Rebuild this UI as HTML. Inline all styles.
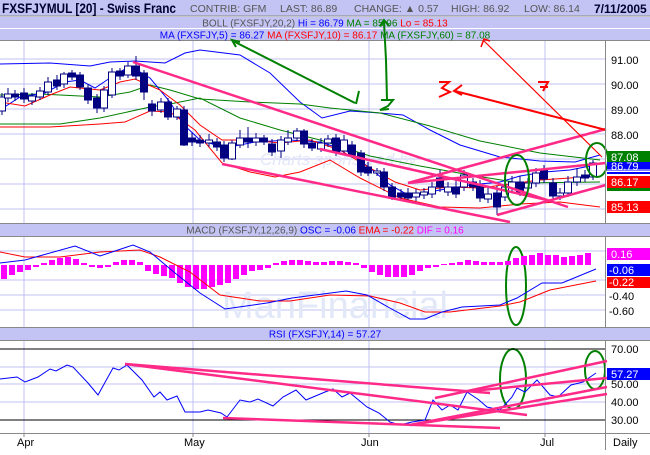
<!DOCTYPE html><html><head><style>
body{margin:0;width:650px;height:450px;overflow:hidden;background:#fff;font-family:"Liberation Sans",sans-serif}
</style></head><body>
<svg width="650" height="450" viewBox="0 0 650 450" xmlns="http://www.w3.org/2000/svg" font-family="Liberation Sans, sans-serif">
<rect width="650" height="450" fill="#fff"/>
<!-- header -->
<rect x="0" y="0" width="650" height="16" fill="#c4c4f4"/>
<line x1="0" y1="16" x2="650" y2="16" stroke="#888"/>
<text x="2" y="13" font-size="14" font-weight="bold" fill="#000030" textLength="174" lengthAdjust="spacingAndGlyphs">FXSFJYMUL [20] - Swiss Franc</text>
<text x="190" y="12" font-size="10.5" fill="#555">CONTRIB: GFM</text>
<text x="280" y="12" font-size="10.5" fill="#555">LAST: 86.89</text>
<text x="354" y="12" font-size="10.5" fill="#555">CHANGE: ▲ 0.57</text>
<text x="451" y="12" font-size="10.5" fill="#555">HIGH: 86.92</text>
<text x="524" y="12" font-size="10.5" fill="#555">LOW: 86.14</text>
<text x="594" y="13" font-size="12" font-weight="bold" fill="#000030">7/11/2005</text>
<rect x="0" y="17" width="650" height="11" fill="#c4c4f4"/>
<line x1="0" y1="28.5" x2="650" y2="28.5" stroke="#fff"/>
<rect x="0" y="29" width="650" height="11" fill="#c4c4f4"/>
<line x1="0" y1="40.5" x2="650" y2="40.5" stroke="#888"/>
<text x="325" y="26.5" font-size="10" text-anchor="middle"><tspan fill="#555">BOLL (FXSFJY,20,2) </tspan><tspan fill="#0000ff">Hi = 86.79 </tspan><tspan fill="#008000">MA = 85.96 </tspan><tspan fill="#ff0000">Lo = 85.13</tspan></text>
<text x="325" y="38.5" font-size="10" text-anchor="middle"><tspan fill="#0000ff">MA (FXSFJY,5) = 86.27 </tspan><tspan fill="#ff0000">MA (FXSFJY,10) = 86.17 </tspan><tspan fill="#008000">MA (FXSFJY,60) = 87.08</tspan></text>
<!-- grids main -->
<g stroke="#c0c0f0" stroke-width="1">
<line x1="0" y1="59" x2="605" y2="59"/><line x1="0" y1="84" x2="605" y2="84"/><line x1="0" y1="109" x2="605" y2="109"/><line x1="0" y1="134" x2="605" y2="134"/><line x1="0" y1="159" x2="605" y2="159"/><line x1="0" y1="184" x2="605" y2="184"/><line x1="0" y1="209" x2="605" y2="209"/>
<line x1="24" y1="41" x2="24" y2="223"/><line x1="193" y1="41" x2="193" y2="223"/><line x1="369" y1="41" x2="369" y2="223"/><line x1="545" y1="41" x2="545" y2="223"/>
<line x1="0" y1="251" x2="605" y2="251"/><line x1="0" y1="280" x2="605" y2="280"/><line x1="0" y1="295" x2="605" y2="295"/><line x1="0" y1="310" x2="605" y2="310"/>
<line x1="24" y1="237" x2="24" y2="327"/><line x1="193" y1="237" x2="193" y2="327"/><line x1="369" y1="237" x2="369" y2="327"/><line x1="545" y1="237" x2="545" y2="327"/>
<line x1="0" y1="367" x2="605" y2="367"/><line x1="0" y1="384" x2="605" y2="384"/><line x1="0" y1="402" x2="605" y2="402"/>
<line x1="24" y1="341" x2="24" y2="433"/><line x1="193" y1="341" x2="193" y2="433"/><line x1="369" y1="341" x2="369" y2="433"/><line x1="545" y1="341" x2="545" y2="433"/>
</g>
<!-- watermarks -->
<text x="260" y="165" font-size="17" fill="#e2e6f8" font-style="italic">Charts sponsored by</text>
<text x="222" y="318" font-size="38" fill="#e2e8f8">ManFinancial</text>
<!-- main lines -->
<g fill="none" stroke-width="1">
<polyline stroke="#0000ff" points="0,64 50,63 90,66 110,62 135,61 165,63 185,53 200,50 240,55 270,73 300,102 322,118 350,111 380,113 403,115 430,130 460,145 500,157 540,161 575,162 600,155"/>
<polyline stroke="#008000" points="0,124 60,124 100,118 150,107 170,104 200,98 240,118 280,130 320,140 370,156 420,166 470,175 520,183 600,182"/>
<polyline stroke="#ff0000" points="0,127 50,127 100,124 125,122 150,111 170,112 195,130 222,163 250,172 275,177 300,172 330,160 360,178 400,198 440,207 480,208 520,204 560,202 600,207"/>
<polyline stroke="#008000" points="0,95 40,94 80,96 100,97 130,92 150,85 170,90 200,99 250,102 300,104 330,108 380,113 430,126 480,141 540,153 600,160"/>
<polyline stroke="#0000ff" points="0,110 20,97 45,93 65,82 80,80 95,88 110,78 130,66 150,78 170,102 184,125 200,140 225,148 255,142 290,140 320,142 345,150 370,168 390,185 410,196 440,190 470,185 500,182 520,176 545,172 570,170 590,166"/>
<polyline stroke="#ff0000" points="0,102 25,106 50,95 70,87 100,90 120,82 135,79 160,90 180,105 200,125 222,140 250,140 280,143 310,140 340,150 370,168 395,182 420,190 450,187 480,188 510,184 540,180 570,178 592,176"/>
</g>
<!-- candles -->
<g stroke="#000080" stroke-width="1">
<line x1="2" y1="93" x2="2" y2="115"/><line x1="8" y1="88" x2="8" y2="102"/><line x1="15" y1="90" x2="15" y2="101"/><line x1="24" y1="88" x2="24" y2="103"/><line x1="32" y1="93" x2="32" y2="105"/><line x1="40" y1="87" x2="40" y2="100"/><line x1="48" y1="77" x2="48" y2="95"/><line x1="57" y1="75" x2="57" y2="90"/><line x1="64" y1="72" x2="64" y2="88"/><line x1="72" y1="70" x2="72" y2="80"/><line x1="80" y1="72" x2="80" y2="90"/><line x1="88" y1="84" x2="88" y2="104"/><line x1="97" y1="94" x2="97" y2="113"/><line x1="104" y1="86" x2="104" y2="112"/><line x1="112" y1="68" x2="112" y2="98"/><line x1="120" y1="68" x2="120" y2="80"/><line x1="128" y1="62" x2="128" y2="78"/><line x1="136" y1="56" x2="136" y2="80"/><line x1="144" y1="70" x2="144" y2="100"/><line x1="152" y1="100" x2="152" y2="116"/><line x1="161" y1="98" x2="161" y2="113"/><line x1="168" y1="98" x2="168" y2="120"/><line x1="177" y1="106" x2="177" y2="120"/><line x1="184" y1="106" x2="184" y2="146"/><line x1="192" y1="133" x2="192" y2="146"/><line x1="200" y1="135" x2="200" y2="147"/><line x1="209" y1="134" x2="209" y2="147"/><line x1="217" y1="138" x2="217" y2="151"/><line x1="224" y1="141" x2="224" y2="162"/><line x1="232" y1="140" x2="232" y2="160"/><line x1="240" y1="130" x2="240" y2="148"/><line x1="248" y1="127" x2="248" y2="148"/><line x1="256" y1="133" x2="256" y2="146"/><line x1="264" y1="135" x2="264" y2="145"/><line x1="272" y1="139" x2="272" y2="156"/><line x1="281" y1="136" x2="281" y2="158"/><line x1="288" y1="130" x2="288" y2="145"/><line x1="297" y1="128" x2="297" y2="141"/><line x1="304" y1="129" x2="304" y2="148"/><line x1="312" y1="139" x2="312" y2="151"/><line x1="321" y1="138" x2="321" y2="152"/><line x1="328" y1="135" x2="328" y2="147"/><line x1="336" y1="134" x2="336" y2="156"/><line x1="344" y1="135" x2="344" y2="155"/><line x1="352" y1="141" x2="352" y2="158"/><line x1="361" y1="150" x2="361" y2="176"/><line x1="368" y1="162" x2="368" y2="176"/><line x1="377" y1="168" x2="377" y2="176"/><line x1="384" y1="168" x2="384" y2="191"/><line x1="392" y1="183" x2="392" y2="200"/><line x1="401" y1="189" x2="401" y2="200"/><line x1="408" y1="188" x2="408" y2="202"/><line x1="416" y1="189" x2="416" y2="201"/><line x1="424" y1="188" x2="424" y2="199"/><line x1="432" y1="182" x2="432" y2="198"/><line x1="440" y1="170" x2="440" y2="192"/><line x1="448" y1="182" x2="448" y2="196"/><line x1="456" y1="180" x2="456" y2="198"/><line x1="464" y1="170" x2="464" y2="191"/><line x1="473" y1="178" x2="473" y2="191"/><line x1="480" y1="180" x2="480" y2="202"/><line x1="488" y1="188" x2="488" y2="203"/><line x1="497" y1="186" x2="497" y2="215"/><line x1="505" y1="180" x2="505" y2="201"/><line x1="512" y1="176" x2="512" y2="192"/><line x1="520" y1="176" x2="520" y2="196"/><line x1="528" y1="178" x2="528" y2="192"/><line x1="536" y1="168" x2="536" y2="187"/><line x1="544" y1="165" x2="544" y2="183"/><line x1="553" y1="178" x2="553" y2="200"/><line x1="560" y1="188" x2="560" y2="200"/><line x1="568" y1="176" x2="568" y2="197"/><line x1="577" y1="168" x2="577" y2="186"/><line x1="585" y1="170" x2="585" y2="182"/><line x1="593" y1="160" x2="593" y2="180"/>
</g>
<g stroke="#000080" stroke-width="1">
<rect x="-1.5" y="97" width="7" height="14" fill="#fff"/><rect x="4.5" y="94" width="7" height="4" fill="#fff"/><rect x="11.5" y="94" width="7" height="3" fill="#000080"/><rect x="20.5" y="93" width="7" height="6" fill="#000080"/><rect x="28.5" y="96" width="7" height="5" fill="#fff"/><rect x="36.5" y="91" width="7" height="6" fill="#fff"/><rect x="44.5" y="82" width="7" height="10" fill="#fff"/><rect x="53.5" y="80" width="7" height="6" fill="#000080"/><rect x="60.5" y="74" width="7" height="10" fill="#fff"/><rect x="68.5" y="73" width="7" height="4" fill="#000080"/><rect x="76.5" y="75" width="7" height="12" fill="#000080"/><rect x="84.5" y="88" width="7" height="12" fill="#000080"/><rect x="93.5" y="98" width="7" height="10" fill="#000080"/><rect x="100.5" y="90" width="7" height="18" fill="#fff"/><rect x="108.5" y="72" width="7" height="23" fill="#fff"/><rect x="116.5" y="71" width="7" height="5" fill="#000080"/><rect x="124.5" y="66" width="7" height="9" fill="#fff"/><rect x="132.5" y="66" width="7" height="10" fill="#000080"/><rect x="140.5" y="73" width="7" height="19" fill="#000080"/><rect x="148.5" y="104" width="7" height="7" fill="#000080"/><rect x="157.5" y="102" width="7" height="8" fill="#fff"/><rect x="164.5" y="102" width="7" height="15" fill="#000080"/><rect x="173.5" y="109" width="7" height="8" fill="#fff"/><rect x="180.5" y="110" width="7" height="35" fill="#000080"/><rect x="188.5" y="138" width="7" height="4" fill="#000080"/><rect x="196.5" y="140" width="7" height="3" fill="#000080"/><rect x="205.5" y="140" width="7" height="3" fill="#fff"/><rect x="213.5" y="142" width="7" height="5" fill="#000080"/><rect x="220.5" y="145" width="7" height="13" fill="#000080"/><rect x="228.5" y="143" width="7" height="16" fill="#fff"/><rect x="236.5" y="138" width="7" height="7" fill="#fff"/><rect x="244.5" y="138" width="7" height="4" fill="#000080"/><rect x="252.5" y="138" width="7" height="4" fill="#fff"/><rect x="260.5" y="138" width="7" height="4" fill="#000080"/><rect x="268.5" y="144" width="7" height="8" fill="#000080"/><rect x="277.5" y="140" width="7" height="11" fill="#fff"/><rect x="284.5" y="138" width="7" height="4" fill="#fff"/><rect x="293.5" y="131" width="7" height="7" fill="#fff"/><rect x="300.5" y="131" width="7" height="13" fill="#000080"/><rect x="308.5" y="143" width="7" height="5" fill="#000080"/><rect x="317.5" y="143" width="7" height="6" fill="#fff"/><rect x="324.5" y="139" width="7" height="4" fill="#fff"/><rect x="332.5" y="138" width="7" height="14" fill="#000080"/><rect x="340.5" y="140" width="7" height="11" fill="#fff"/><rect x="348.5" y="145" width="7" height="10" fill="#000080"/><rect x="357.5" y="153" width="7" height="19" fill="#000080"/><rect x="364.5" y="167" width="7" height="6" fill="#000080"/><rect x="373.5" y="171" width="7" height="2" fill="#fff"/><rect x="380.5" y="172" width="7" height="15" fill="#000080"/><rect x="388.5" y="187" width="7" height="10" fill="#000080"/><rect x="397.5" y="193" width="7" height="4" fill="#000080"/><rect x="404.5" y="193" width="7" height="5" fill="#000080"/><rect x="412.5" y="193" width="7" height="4" fill="#fff"/><rect x="420.5" y="192" width="7" height="3" fill="#fff"/><rect x="428.5" y="187" width="7" height="7" fill="#fff"/><rect x="436.5" y="178" width="7" height="9" fill="#000080"/><rect x="444.5" y="187" width="7" height="5" fill="#fff"/><rect x="452.5" y="187" width="7" height="7" fill="#000080"/><rect x="460.5" y="175" width="7" height="12" fill="#fff"/><rect x="469.5" y="182" width="7" height="5" fill="#000080"/><rect x="476.5" y="185" width="7" height="13" fill="#000080"/><rect x="484.5" y="194" width="7" height="5" fill="#fff"/><rect x="493.5" y="193" width="7" height="14" fill="#000080"/><rect x="501.5" y="187" width="7" height="10" fill="#fff"/><rect x="508.5" y="182" width="7" height="6" fill="#fff"/><rect x="516.5" y="182" width="7" height="10" fill="#000080"/><rect x="524.5" y="183" width="7" height="5" fill="#fff"/><rect x="532.5" y="173" width="7" height="10" fill="#fff"/><rect x="540.5" y="169" width="7" height="10" fill="#000080"/><rect x="549.5" y="183" width="7" height="13" fill="#000080"/><rect x="556.5" y="193" width="7" height="3" fill="#fff"/><rect x="564.5" y="182" width="7" height="11" fill="#fff"/><rect x="573.5" y="177" width="7" height="5" fill="#fff"/><rect x="581.5" y="175" width="7" height="3" fill="#000080"/><rect x="589.5" y="163" width="7" height="14" fill="#fff"/>
</g>
<!-- pink trendlines main -->
<g stroke="#ff2a88" stroke-width="2.5" fill="none">
<line x1="133" y1="62" x2="568" y2="207"/>
<line x1="222" y1="164" x2="510" y2="222"/>
<line x1="320" y1="149" x2="547" y2="200"/>
<line x1="408" y1="183" x2="606" y2="129"/>
<line x1="408" y1="183" x2="606" y2="163"/>
<line x1="497" y1="215" x2="606" y2="185"/>
</g>
<!-- red annotations -->
<g stroke="#ff0000" fill="none">
<line x1="455" y1="91" x2="606" y2="130" stroke-width="2"/>
<polyline points="462,85 454,91 462,95" stroke-width="2"/>
<line x1="483" y1="40" x2="602" y2="157" stroke-width="1.2"/>
<polyline points="481,47 484,39 490,41" stroke-width="1.5"/>
<path d="M439,82 L449,82 L442,88 L450,92 L439,97" stroke-width="2"/>
<path d="M538,82 L548,82 L543,91 M540,87 L548,87" stroke-width="2"/>
</g>
<!-- green annotations -->
<g stroke="#008000" fill="none" stroke-width="2">
<line x1="233" y1="41" x2="355" y2="103"/>
<polyline points="236,47 232,40 240,42"/>
<path d="M359,91 L356,104"/>
<path d="M384,22 L386,60 L387,100 M381,100 L393,100 L388,106 L380,110 L389,109"/>
<polyline points="380,26 384,20 389,26"/>
<ellipse cx="517" cy="180" rx="12" ry="25"/>
<ellipse cx="597" cy="160" rx="11" ry="17"/>
<ellipse cx="516" cy="286" rx="10" ry="39"/>
<ellipse cx="513" cy="379" rx="13" ry="30"/>
<ellipse cx="595" cy="370" rx="10" ry="19"/>
</g>
<!-- right axis main -->
<line x1="605.5" y1="41" x2="605.5" y2="450" stroke="#888"/>
<g font-size="11" fill="#000">
<text x="611" y="64">91.00</text><text x="611" y="89">90.00</text><text x="611" y="114">89.00</text><text x="611" y="139">88.00</text>
</g>
<rect x="607" y="151" width="43" height="11" fill="#008000"/><text x="611" y="161" font-size="11" fill="#fff">87.08</text>
<rect x="607" y="162" width="43" height="9" fill="#0000ff"/><text x="611" y="170" font-size="11" fill="#fff">86.79</text>
<line x1="607" y1="170" x2="650" y2="170" stroke="#fff"/>
<rect x="607" y="172" width="43" height="2" fill="#0000ff"/>
<rect x="607" y="176" width="43" height="12" fill="#ff0000"/><text x="611" y="186" font-size="11" fill="#fff">86.17</text>
<rect x="607" y="188" width="43" height="3" fill="#008000"/>
<rect x="607" y="201" width="43" height="12" fill="#ff0000"/><text x="611" y="211" font-size="11" fill="#fff">85.13</text>
<!-- MACD bar -->
<line x1="0" y1="223.5" x2="650" y2="223.5" stroke="#888"/>
<rect x="0" y="224" width="650" height="12" fill="#c4c4f4"/>
<line x1="0" y1="236.5" x2="650" y2="236.5" stroke="#888"/>
<text x="325" y="233.5" font-size="10" text-anchor="middle"><tspan fill="#555">MACD (FXSFJY,12,26,9) </tspan><tspan fill="#0000ff">OSC = -0.06 </tspan><tspan fill="#ff0000">EMA = -0.22 </tspan><tspan fill="#ff00ff">DIF = 0.16</tspan></text>
<!-- histogram -->
<g fill="#ff00ff">
<rect x="1" y="265" width="6" height="14"/><rect x="9" y="265" width="6" height="10"/><rect x="17" y="265" width="6" height="7"/><rect x="25" y="265" width="6" height="5"/><rect x="33" y="265" width="6" height="2"/><rect x="41" y="263" width="6" height="2"/><rect x="49" y="260" width="6" height="5"/><rect x="57" y="258" width="6" height="7"/><rect x="65" y="257" width="6" height="8"/><rect x="73" y="259" width="6" height="6"/><rect x="81" y="263" width="6" height="2"/><rect x="89" y="265" width="6" height="2"/><rect x="97" y="265" width="6" height="3"/><rect x="105" y="265" width="6" height="2"/><rect x="113" y="262" width="6" height="3"/><rect x="121" y="260" width="6" height="5"/><rect x="129" y="260" width="6" height="5"/><rect x="137" y="262" width="6" height="3"/><rect x="145" y="265" width="6" height="6"/><rect x="153" y="265" width="6" height="9"/><rect x="161" y="265" width="6" height="11"/><rect x="169" y="265" width="6" height="13"/><rect x="177" y="265" width="6" height="18"/><rect x="185" y="265" width="6" height="22"/><rect x="193" y="265" width="6" height="24"/><rect x="201" y="265" width="6" height="24"/><rect x="209" y="265" width="6" height="22"/><rect x="217" y="265" width="6" height="20"/><rect x="225" y="265" width="6" height="18"/><rect x="233" y="265" width="6" height="14"/><rect x="241" y="265" width="6" height="10"/><rect x="249" y="265" width="6" height="6"/><rect x="257" y="265" width="6" height="5"/><rect x="265" y="265" width="6" height="3"/><rect x="273" y="263" width="6" height="2"/><rect x="281" y="261" width="6" height="4"/><rect x="289" y="260" width="6" height="5"/><rect x="297" y="260" width="6" height="5"/><rect x="305" y="261" width="6" height="4"/><rect x="313" y="262" width="6" height="3"/><rect x="321" y="262" width="6" height="3"/><rect x="329" y="261" width="6" height="4"/><rect x="337" y="261" width="6" height="4"/><rect x="345" y="262" width="6" height="3"/><rect x="353" y="263" width="6" height="2"/><rect x="361" y="265" width="6" height="3"/><rect x="369" y="265" width="6" height="7"/><rect x="377" y="265" width="6" height="10"/><rect x="385" y="265" width="6" height="12"/><rect x="393" y="265" width="6" height="12"/><rect x="401" y="265" width="6" height="12"/><rect x="409" y="265" width="6" height="10"/><rect x="417" y="265" width="6" height="6"/><rect x="425" y="265" width="6" height="3"/><rect x="433" y="265" width="6" height="2"/><rect x="441" y="264" width="6" height="1"/><rect x="449" y="263" width="6" height="2"/><rect x="457" y="262" width="6" height="3"/><rect x="465" y="260" width="6" height="5"/><rect x="473" y="261" width="6" height="4"/><rect x="481" y="262" width="6" height="3"/><rect x="489" y="262" width="6" height="3"/><rect x="497" y="262" width="6" height="3"/><rect x="505" y="261" width="6" height="4"/><rect x="513" y="258" width="6" height="7"/><rect x="521" y="256" width="6" height="9"/><rect x="529" y="255" width="6" height="10"/><rect x="537" y="253" width="6" height="12"/><rect x="545" y="255" width="6" height="10"/><rect x="553" y="255" width="6" height="10"/><rect x="561" y="257" width="6" height="8"/><rect x="569" y="256" width="6" height="9"/><rect x="577" y="255" width="6" height="10"/><rect x="585" y="253" width="6" height="12"/>
</g>
<g fill="none" stroke-width="1">
<polyline stroke="#ff0000" points="0,252 25,257 60,257 100,252 140,250 160,257 190,272 220,295 260,301 290,301 330,295 370,296 400,303 425,312 450,312 500,306 520,302 550,290 596,281"/>
<polyline stroke="#0000ff" points="0,263 25,260 75,246 100,256 133,245 150,252 175,273 200,293 225,309 267,303 292,298 346,291 367,295 388,307 410,319 425,319 442,312 462,307 500,305 517,298 542,283 562,283 596,269"/>
</g>
<rect x="607" y="248" width="43" height="12" fill="#ff00ff"/><text x="611" y="258" font-size="11" fill="#fff">0.16</text>
<rect x="607" y="264" width="43" height="12" fill="#0000ff"/><text x="609" y="274" font-size="11" fill="#fff">-0.06</text>
<rect x="607" y="277" width="43" height="11" fill="#ff0000"/><text x="609" y="286" font-size="11" fill="#fff">-0.22</text>
<text x="609" y="300" font-size="11">-0.40</text><text x="609" y="315" font-size="11">-0.60</text>
<!-- RSI bar -->
<line x1="0" y1="327.5" x2="650" y2="327.5" stroke="#888"/>
<rect x="0" y="328" width="650" height="12" fill="#c4c4f4"/>
<line x1="0" y1="340.5" x2="650" y2="340.5" stroke="#888"/>
<text x="325" y="337.5" font-size="10" text-anchor="middle" fill="#0000ff">RSI (FXSFJY,14) = 57.27</text>
<line x1="0" y1="349" x2="605" y2="349" stroke="#000"/>
<line x1="0" y1="420" x2="605" y2="420" stroke="#000"/>
<polyline fill="none" stroke="#0000ff" stroke-width="1" points="0,379 17,377 25,382 38,377 50,369 56,371 67,365 73,367 88,383 98,395 113,368 119,370 127,365 142,380 154,397 160,392 167,400 177,396 185,412 200,412 208,410 221,413 227,417 240,400 250,402 258,399 273,406 283,397 296,390 306,400 325,392 333,389 342,397 350,393 367,407 379,413 390,422 400,425 412,422 425,420 433,400 442,410 450,405 458,410 467,392 479,400 487,407 500,410 512,397 517,388 525,392 537,380 550,395 558,397 571,385 583,382 596,373"/>
<g stroke="#ff2a88" stroke-width="2.5" fill="none">
<line x1="125" y1="364" x2="527" y2="415"/>
<line x1="125" y1="364" x2="490" y2="393"/>
<line x1="223" y1="418" x2="500" y2="428"/>
<line x1="410" y1="425" x2="607" y2="394"/>
<line x1="410" y1="425" x2="607" y2="387"/>
<line x1="435" y1="398" x2="607" y2="361"/>
<line x1="460" y1="392" x2="607" y2="378"/>
</g>
<g font-size="11"><text x="611" y="353">70.00</text><text x="611" y="388">50.00</text><text x="611" y="406">40.00</text><text x="611" y="424">30.00</text></g>
<rect x="607" y="368" width="43" height="12" fill="#0000ff"/><text x="611" y="378" font-size="11" fill="#fff">57.27</text>
<!-- date axis -->
<line x1="0" y1="433.5" x2="650" y2="433.5" stroke="#888"/>
<g stroke="#888"><line x1="24" y1="433" x2="24" y2="437"/><line x1="193" y1="433" x2="193" y2="437"/><line x1="369" y1="433" x2="369" y2="437"/><line x1="545" y1="433" x2="545" y2="437"/></g>
<g font-size="11"><text x="17" y="446">Apr</text><text x="184" y="446">May</text><text x="361" y="446">Jun</text><text x="540" y="446">Jul</text><text x="613" y="446">Daily</text></g>
</svg>
</body></html>
